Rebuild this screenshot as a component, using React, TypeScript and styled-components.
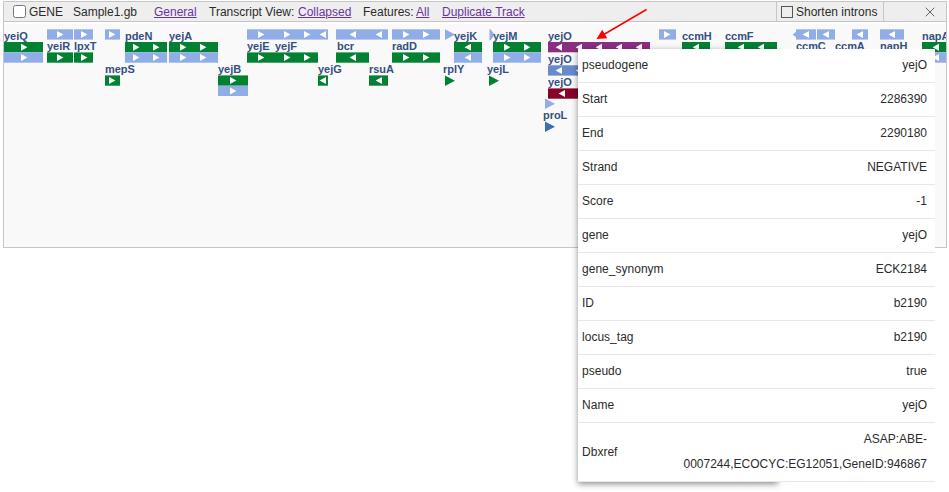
import React from "react";
import styled, { createGlobalStyle } from "styled-components";

const GlobalStyle = createGlobalStyle`
  html, body { margin: 0; background: #fff; overflow: hidden; }
  body { font-family: "Liberation Sans", Arial, sans-serif; font-size: 12px; color: #2b2b2b; }
  *, *::before, *::after { box-sizing: border-box; }
`;

const Page = styled.main`
  position: relative;
  width: 949px;
  height: 492px;
  padding: 1px 2px 0 3px;
`;

const Track = styled.section`
  width: 944px;
  height: 247px;
  border: 1px solid #c6c6c6;
  background: #f9f9f9;
`;

const Header = styled.header`
  display: flex;
  align-items: center;
  height: 20px;
  padding-left: 9px;
  background: #eee;
  border-bottom: 1px solid #c6c6c6;
  white-space: nowrap;
`;

const Checkbox = styled.span<{ $round?: boolean }>`
  flex: none;
  width: ${(p) => (p.$round ? 13 : 12)}px;
  height: ${(p) => (p.$round ? 13 : 12)}px;
  border: 1px solid ${(p) => (p.$round ? "#767676" : "#555")};
  border-radius: ${(p) => (p.$round ? 2.5 : 0)}px;
  background: ${(p) => (p.$round ? "#fff" : "transparent")};
`;

const HeaderText = styled.span<{ $gap: number; $width: number }>`
  margin-left: ${(p) => p.$gap}px;
  width: ${(p) => p.$width}px;
  line-height: 20px;
`;

const HeaderLink = styled(HeaderText).attrs({ as: "a" })`
  color: #6a35a0;
  text-decoration: underline;
`;

const IntronOption = styled.label`
  display: flex;
  align-items: center;
  gap: 3px;
  width: 108px;
  height: 19px;
  margin-left: auto;
  padding-left: 4px;
  border: solid #c6c6c6;
  border-width: 0 1px;
`;

const CloseButton = styled.button`
  display: flex;
  align-items: center;
  justify-content: center;
  width: 62px;
  height: 19px;
  padding: 0 0 0 30px;
  border: 0;
  background: transparent;
`;

const Chart = styled.svg`
  display: block;
  width: 942px;
  height: 225px;
`;

const GeneLabel = styled.text`
  fill: #35507f;
  font: bold 11px "Liberation Sans", Arial, sans-serif;
  letter-spacing: -0.05px;
`;

const Pointer = styled.svg`
  position: absolute;
  left: 590px;
  top: 4px;
  width: 64px;
  height: 40px;
`;

const Tooltip = styled.aside`
  position: absolute;
  left: 578px;
  top: 49px;
  width: 200px;
  height: 433px;
  background: #fff;
  box-shadow: 0 2px 6px rgba(0, 0, 0, 0.45);
`;

const Properties = styled.dl`
  width: 357px;
  margin: 0;
  background: #fff;
`;

const Property = styled.div<{ $tall?: boolean }>`
  display: flex;
  align-items: center;
  justify-content: space-between;
  height: ${(p) => (p.$tall ? 59 : 34)}px;
  padding: ${(p) => (p.$tall ? "0 8px 0 4px" : "0 8px 1px 4px")};
  border-bottom: 1px solid #e8e8e8;
  line-height: 25px;
`;

const Name = styled.dt`
  letter-spacing: 0.02px;
`;

const Value = styled.dd`
  margin: 0;
  max-width: 260px;
  text-align: right;
`;

const GREEN = "#038133";
const BLUE = "#91ade8";
const PURPLE = "#892e80";

type Bar = [x: number, end: number, y: number, color: string, dir: 1 | -1, arrows: number[]];

const bars: Bar[] = [
  [4, 43, 42, GREEN, 1, [24]], [4, 43, 52.4, BLUE, 1, [24]],
  [47, 73, 29.3, BLUE, 1, [60]], [74, 93, 29.3, BLUE, 1, [84]],
  [47, 73, 52.4, GREEN, 1, [60]], [74, 93, 52.4, GREEN, 1, [84]],
  [105, 120, 29.3, BLUE, 1, [112]], [105, 120, 75.4, GREEN, 1, [112]],
  [125, 167, 42, GREEN, 1, [136, 156]], [125, 167, 52.4, BLUE, 1, [136, 156]],
  [169, 218, 42, GREEN, 1, [183, 203]], [169, 218, 52.4, BLUE, 1, [183, 203]],
  [218, 248, 75.4, GREEN, 1, [233]], [218, 248, 85.7, BLUE, 1, [233]],
  [247, 318, 29.3, BLUE, 1, [261, 287, 307]], [318, 328, 29.3, BLUE, -1, [323]],
  [247, 318, 52.4, GREEN, 1, [261, 287, 307]], [318, 328, 75.4, GREEN, -1, [323]],
  [336, 388, 29.3, BLUE, -1, [353, 379]], [336, 369, 52.4, GREEN, -1, [353]],
  [369, 388, 75.4, GREEN, -1, [379]],
  [392, 440, 29.3, BLUE, 1, [406, 426]], [392, 440, 52.4, GREEN, 1, [406, 426]],
  [454, 482, 42, GREEN, -1, [468]], [454, 482, 52.4, BLUE, -1, [468]],
  [493, 541, 42, GREEN, 1, [507, 527]], [493, 541, 52.4, BLUE, 1, [507, 527]],
  [548, 650, 42, PURPLE, -1, [559, 579, 599, 619, 639]],
  [548, 650, 65.3, "#668acb", -1, [559, 579]],
  [548, 650, 88.4, "#870229", -1, [562]],
  [659, 676, 29.3, BLUE, 1, [667]],
  [682, 710, 42, GREEN, -1, [696]], [725, 777, 42, GREEN, -1, [741, 761]],
  [796, 816, 29.3, BLUE, -1, [806]], [817, 835, 29.3, BLUE, -1, [826]],
  [852, 868, 29.3, BLUE, -1, [860]], [880, 904, 29.3, BLUE, -1, [892]],
  [922, 946, 42, GREEN, -1, [936]], [922, 946, 52.4, BLUE, -1, [936]],
];

const labels: [string, number, number][] = [
  ["yeiQ", 4, 40], ["yeiR", 47, 50], ["lpxT", 74, 50], ["mepS", 105, 73],
  ["pdeN", 125, 40], ["yejA", 169, 40], ["yejB", 218, 73],
  ["yejE", 247, 50], ["yejF", 275, 50], ["yejG", 318, 73],
  ["bcr", 337, 50], ["rsuA", 369, 73], ["radD", 392, 50],
  ["rplY", 443, 73], ["yejK", 454, 40], ["yejL", 487, 73], ["yejM", 493, 40],
  ["yejO", 548, 40], ["yejO", 548, 63], ["yejO", 548, 86], ["proL", 543, 119],
  ["ccmH", 682, 40], ["ccmF", 725, 40], ["ccmC", 796, 50], ["ccmA", 835, 50],
  ["napH", 880, 50], ["napA", 922, 40],
];

const smallGenes: [number, number, string][] = [
  [445, 29.3, BLUE], [445, 75.4, GREEN], [489, 75.4, GREEN],
  [545, 98.4, BLUE], [545, 121.4, "#3970b5"],
];

const properties: [string, string][] = [
  ["pseudogene", "yejO"], ["Start", "2286390"], ["End", "2290180"],
  ["Strand", "NEGATIVE"], ["Score", "-1"], ["gene", "yejO"],
  ["gene_synonym", "ECK2184"], ["ID", "b2190"], ["locus_tag", "b2190"],
  ["pseudo", "true"], ["Name", "yejO"],
  ["Dbxref", "ASAP:ABE-0007244,ECOCYC:EG12051,GeneID:946867"],
];

function GeneBar({ bar }: { bar: Bar }) {
  const [x, end, y, color, dir, arrows] = bar;
  return (
    <g>
      <rect x={x} y={y} width={end - x} height={10.3} fill={color} />
      {arrows.map((a) => (
        <path key={a} d={`M${a - 3 * dir} ${y + 1.7}L${a + 3.4 * dir} ${y + 5.2}L${a - 3 * dir} ${y + 8.7}Z`} fill="#fff" />
      ))}
    </g>
  );
}

export default function App() {
  return (
    <Page>
      <GlobalStyle />
      <Track>
        <Header>
          <Checkbox $round />
          <HeaderText $gap={3} $width={34}>GENE</HeaderText>
          <HeaderText $gap={10} $width={65}>Sample1.gb</HeaderText>
          <HeaderLink $gap={16} $width={43}>General</HeaderLink>
          <HeaderText $gap={12} $width={86}>Transcript View:</HeaderText>
          <HeaderLink $gap={3} $width={53}>Collapsed</HeaderLink>
          <HeaderText $gap={12} $width={51}>Features:</HeaderText>
          <HeaderLink $gap={2} $width={14}>All</HeaderLink>
          <HeaderLink $gap={12} $width={83}>Duplicate Track</HeaderLink>
          <IntronOption><Checkbox />Shorten introns</IntronOption>
          <CloseButton aria-label="Close">
            <svg width="10" height="10" viewBox="0 0 10 10">
              <path d="M.7.7l8.6 8.6M9.3.7L.7 9.3" stroke="#666" strokeWidth="1" />
            </svg>
          </CloseButton>
        </Header>
        <Chart viewBox="4 22 942 225">
          <rect x="4" y="22" width="942" height="2" fill="#fff" />
          {bars.map((bar, i) => <GeneBar key={i} bar={bar} />)}
          {smallGenes.map(([x, y, c]) => (
            <path key={`${x}-${y}`} d={`M${x} ${y}l10 5.3l-10 5.3z`} fill={c} />
          ))}
          <path d="M489.5 29.3h1l3 4v3l-3 4h-1z" fill={BLUE} />
          <path d="M792.5 34.5l4-3v6z" fill={BLUE} />
          {labels.map(([t, x, y]) => <GeneLabel key={`${t}-${x}-${y}`} x={x} y={y}>{t}</GeneLabel>)}
        </Chart>
      </Track>
      <Tooltip>
        <Properties>
          {properties.map(([name, value]) => (
            <Property key={name} $tall={name === "Dbxref"}>
              <Name>{name}</Name>
              <Value>{value}</Value>
            </Property>
          ))}
        </Properties>
      </Tooltip>
      <Pointer viewBox="590 4 64 40">
        <path d="M646.5 9.5L603 35" stroke="#f00" strokeWidth="1.5" />
        <path d="M596.5 39L602.2 29.8L607.3 38.3Z" fill="#f00" />
      </Pointer>
    </Page>
  );
}
